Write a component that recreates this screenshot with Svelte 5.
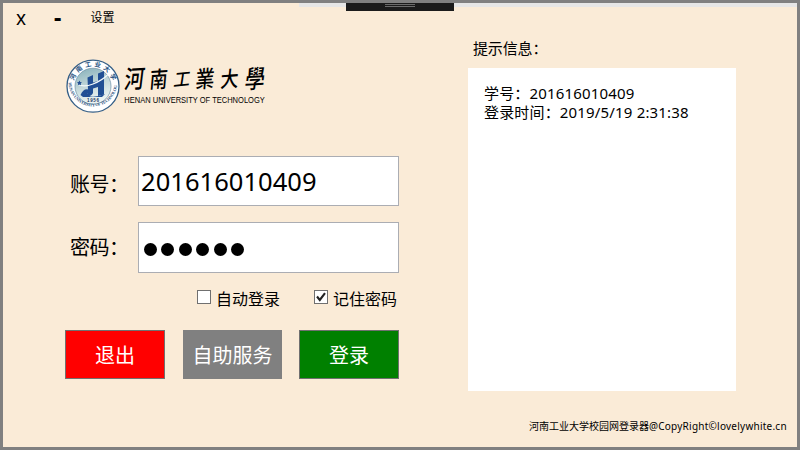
<script>
  const account = '201616010409';
  const messages = ['学号：201616010409', '登录时间：2019/5/19 2:31:38'];
  const options = [
    { label: '自动登录', checked: false },
    { label: '记住密码', checked: true }
  ];
  const actions = [
    { label: '退出', kind: 'exit' },
    { label: '自助服务', kind: 'service' },
    { label: '登录', kind: 'login' }
  ];
</script>

<main class="window">
  <div class="strip"></div>
  <div class="grip"><i></i><i></i></div>

  <section class="left">
    <nav class="menu">
      <span class="close">x</span>
      <span class="min">-</span>
      <span class="settings">设置</span>
    </nav>

    <svg class="logo" width="210" height="60" viewBox="63 56 210 60">
      <defs>
        <linearGradient id="sky" x1="0" y1="0" x2="0.3" y2="1">
          <stop offset="0" stop-color="#83aeb8" />
          <stop offset="0.55" stop-color="#c3d8da" />
          <stop offset="1" stop-color="#edf4f2" />
        </linearGradient>
        <path id="arcTop" d="M73.2 86.2A19.8 19.8 0 0 1 112.8 86.2" />
        <path id="arcBottom" d="M68.700 84.200A24.400 24.400 0 0 0 117.300 84.200" />
      </defs>
      <circle cx="93" cy="86.2" r="26" fill="#fff" stroke="#355f87" stroke-width="1.3" />
      <circle cx="93" cy="86.2" r="18" fill="url(#sky)" stroke="#6d8fa6" stroke-width="0.7" />
      <text class="seal-cn"><textPath href="#arcTop" startOffset="50%" text-anchor="middle" textLength="51">河南工业大学</textPath></text>
      <text class="seal-en"><textPath href="#arcBottom" startOffset="50%" text-anchor="middle" textLength="75">HENAN UNIVERSITY OF TECHNOLOGY</textPath></text>
      <path d="M87.500 77.500l5.500-2.500v7.500l5-1.500v-7.500l6-2.500v23.500l-6 1.500v-9l-5 1.500v4.500q-2 4-7.500 3 2.500-2 2.500-6z" fill="#214f94" />
      <path d="M80.500 95q3-7 8-5.500 4 1.500 3.500 4.500-2.500-2.500-4.500-.5 0 3 5.500 3.300 5-.3 12-2.800l-3 3H83z" fill="#214f94" />
      <path d="M78 84.500q6 3 15-.5t15-9.500" fill="none" stroke="#f4fafb" stroke-width="1.200" />
      <path d="M79.500 80.500l.7 1.600 1.700.2-1.200 1.300.3 1.700-1.500-.8-1.600.8.3-1.800-1.200-1.200 1.700-.2z" fill="#214f94" />
      <text class="year" x="93.300" y="101.500" text-anchor="middle">1956</text>
      <g class="brush">
        <text transform="translate(123.500 88.500) rotate(-3) skewX(-10) scale(.8 1)">河</text>
        <text transform="translate(149 88) rotate(-3) skewX(-8) scale(.72 .9)">南</text>
        <text transform="translate(173 86.500) rotate(-5) skewX(-14) scale(.66 .72)">工</text>
        <text transform="translate(195 88) rotate(-4) skewX(-8) scale(.76 .92)">業</text>
        <text transform="translate(220 87.500) rotate(-4) skewX(-8) scale(.72 .86)">大</text>
        <text transform="translate(244 88.500) rotate(-3) skewX(-10) scale(.8 1)">學</text>
      </g>
      <text class="uni" x="124.300" y="103" textLength="140.500" lengthAdjust="spacingAndGlyphs">HENAN UNIVERSITY OF TECHNOLOGY</text>
    </svg>

    <form class="form">
      <div class="field">
        <span class="label first">账号：</span>
        <div class="box account">{account}</div>
      </div>
      <div class="field second">
        <span class="label">密码：</span>
        <div class="box password">{#each Array(6) as _}<i></i>{/each}</div>
      </div>
      <div class="checks">
        {#each options as option}
          <div class="check">
            <svg width="14" height="14" viewBox="0 0 14 14">
              <rect x=".5" y=".5" width="13" height="13" fill="#fff" stroke="#707070" />
              {#if option.checked}
                <path d="M3 6.500L5.800 10L11 3.200" fill="none" stroke="#212121" stroke-width="2.100" />
              {/if}
            </svg>
            <span>{option.label}</span>
          </div>
        {/each}
      </div>
      <div class="actions">
        {#each actions as action}
          <button type="button" class={action.kind}>{action.label}</button>
        {/each}
      </div>
    </form>
  </section>

  <section class="right">
    <h2>提示信息：</h2>
    <div class="log">
      {#each messages as message}<p>{message}</p>{/each}
    </div>
    <footer><span>河南工业大学校园网登录器</span><span class="copy">@CopyRight©lovelywhite.cn</span></footer>
  </section>
</main>

<style>
  .window {
    position: relative;
    box-sizing: border-box;
    width: 800px;
    height: 450px;
    border: 3px solid #808080;
    background: #faebd7;
    color: #000;
    display: flex;
    overflow: hidden;
    font-family: "Noto Sans", "Noto Sans CJK SC", sans-serif;
  }
  .strip {
    position: absolute;
    left: 296px;
    right: 0;
    top: 0;
    height: 4px;
    background: #e6e6e6;
  }
  .grip {
    position: absolute;
    left: 343px;
    top: -3px;
    width: 108px;
    height: 11px;
    box-sizing: border-box;
    padding: 4px 0 0 39px;
    background: #1b1b1b;
  }
  .grip i {
    display: block;
    width: 30px;
    height: 1px;
    margin-bottom: 1px;
    background: #6b6b6b;
  }
  .left { width: 465px; }
  .menu {
    display: flex;
    height: 30px;
    line-height: 30px;
    padding-left: 13px;
  }
  .close { width: 38px; font-size: 19px; line-height: 30px; }
  .min { width: 36.5px; font-size: 23px; font-weight: 700; line-height: 29px; }
  .settings { font-size: 12px; }
  .logo { display: block; margin: 23px 0 0 60px; }
  .seal-cn { font: 700 6.3px "Noto Sans CJK SC", sans-serif; fill: #244f80; }
  .seal-en { font: 700 4.3px "Liberation Serif", serif; fill: #31567f; }
  .year { font: 700 4.5px "Liberation Sans", sans-serif; fill: #1d3762; letter-spacing: .6px; }
  .brush text { font: 500 25px "Noto Sans CJK TC", sans-serif; }
  .uni { font: 8.5px "Liberation Sans", sans-serif; }
  .form { padding: 40px 0 0 62px; }
  .field { display: flex; height: 50px; }
  .second { margin-top: 16px; height: 51px; }
  .label {
    width: 73px;
    box-sizing: border-box;
    padding-left: 5px;
    font-size: 20px;
    line-height: 52px;
    letter-spacing: -.5px;
    white-space: nowrap;
  }
  .first { line-height: 58px; }
  .box {
    box-sizing: border-box;
    width: 261px;
    border: 1px solid #abadb3;
    background: #fff;
  }
  .account {
    padding-left: 2px;
    font-size: 25.5px;
    line-height: 49px;
    letter-spacing: .05px;
  }
  .password {
    display: flex;
    align-items: center;
    gap: 4.6px;
    padding: 4px 0 0 4.5px;
  }
  .password i { width: 13px; height: 13px; border-radius: 50%; background: #000; }
  .checks { display: flex; margin: 16px 0 0 132px; height: 18px; }
  .check { display: flex; width: 117px; font-size: 16px; line-height: 20px; white-space: nowrap; }
  .check svg { margin: 1px 5px 0 0; flex: none; }
  .actions { display: flex; margin-top: 23px; }
  button {
    box-sizing: border-box;
    width: 100px;
    height: 49px;
    padding: 0;
    border: 1px solid #707070;
    color: #fff;
    font: 20px/47px "Noto Sans CJK SC", sans-serif;
  }
  .exit { background: #f00; }
  .service { width: 99px; margin: 0 17px 0 18px; background: #808080; border-color: #808080; }
  .login { background: #008000; }
  .right { flex: 1; }
  h2 { margin: 34px 0 0 5px; font-size: 15px; font-weight: 400; line-height: 22px; letter-spacing: -.15px; }
  .log {
    box-sizing: border-box;
    width: 268px;
    height: 323px;
    margin-top: 9px;
    padding: 16px;
    background: #fff;
    font-size: 15px;
    letter-spacing: .17px;
  }
  .log p { margin: 0; height: 19px; line-height: 19px; white-space: nowrap; }
  footer {
    display: flex;
    margin: 27px 0 0 61px;
    font-size: 10px;
    line-height: 16px;
    white-space: nowrap;
  }
  .copy { letter-spacing: .24px; }
</style>
